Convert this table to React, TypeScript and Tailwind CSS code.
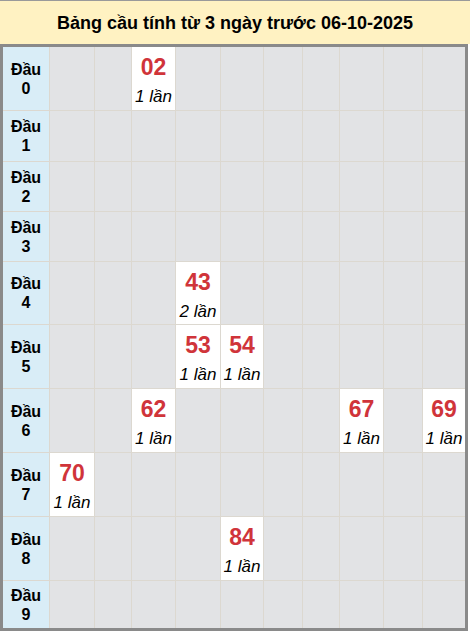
const cols = [46, 44, 36, 43, 44, 42, 38, 36, 43, 38, 42];

// đầu -> { đuôi: [số, số lần] }
const hits: Record<number, Record<number, [string, number]>> = {
  0: { 2: ["02", 1] },
  4: { 3: ["43", 2] },
  5: { 3: ["53", 1], 4: ["54", 1] },
  6: { 2: ["62", 1], 7: ["67", 1], 9: ["69", 1] },
  7: { 0: ["70", 1] },
  8: { 4: ["84", 1] },
};

export default function App() {
  return (
    <div className="w-[473px] h-[632px] bg-white font-['Liberation_Sans',Arial,sans-serif]">
      <div className="w-[470px] h-[44px] border-t border-[#9a9a9a] bg-[#fff2c2] flex items-center justify-center">
        <span className="text-[18px] font-bold text-black leading-none">
          Bảng cầu tính từ 3 ngày trước 06-10-2025
        </span>
      </div>
      <div className="w-[468px] border-[3px] border-[#8a8a8a] border-t-[3px]">
        <div className="grid gap-px bg-[#dcd8d0] grid-cols-[46px_44px_36px_43px_44px_42px_38px_36px_43px_38px_42px] grid-rows-[63px_50px_49px_49px_62px_63px_63px_63px_63px_47px]">
          {Array.from({ length: 10 }).map((_, dau) => (
            <Row key={dau} dau={dau} />
          ))}
        </div>
      </div>
    </div>
  );
}

function Row({ dau }: { dau: number }) {
  const row = hits[dau] || {};
  return (
    <>
      <div className="bg-[#d9edf7] flex flex-col items-center justify-center text-[16px] font-bold leading-[19px] text-black">
        <span>Đầu</span>
        <span>{dau}</span>
      </div>
      {cols.slice(1).map((_, duoi) => {
        const hit = row[duoi];
        if (!hit) return <div key={duoi} className="bg-[#e2e3e5]" />;
        return (
          <div key={duoi} className="bg-white flex flex-col items-center pt-[6px]">
            <span className="text-[23px] font-bold leading-[29px] text-[#d0343a]">{hit[0]}</span>
            <span className="text-[17px] italic leading-[29px] text-black whitespace-nowrap">{hit[1]} lần</span>
          </div>
        );
      })}
    </>
  );
}
